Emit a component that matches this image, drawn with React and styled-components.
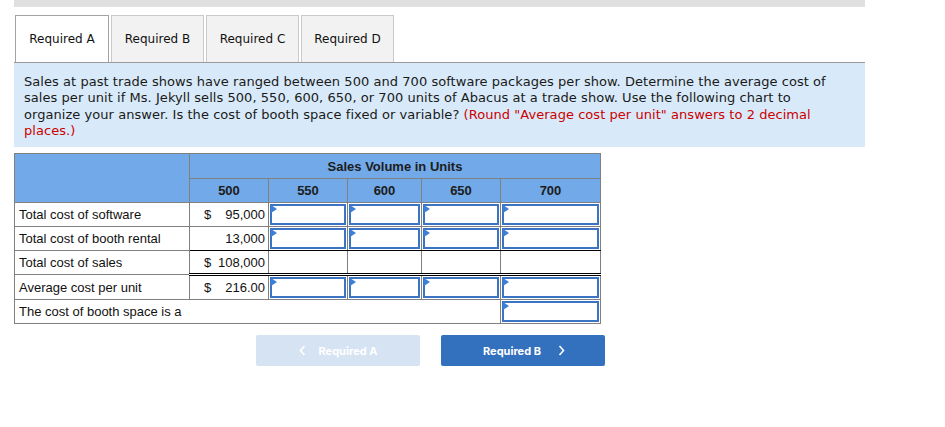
import React from 'react';
import styled, { createGlobalStyle } from 'styled-components';

const GlobalStyle = createGlobalStyle`
  body {
    margin: 0;
    background: #fff;
    color: #1a1a1a;
    font-family: "DejaVu Sans", Verdana, sans-serif;
  }
`;

const Page = styled.div`
  width: 851px;
  padding-left: 14px;
`;

const TopBar = styled.div`
  height: 7px;
  background: #e0e0e0;
`;

const TabBar = styled.div`
  display: flex;
  gap: 2px;
  margin-top: 8px;
  padding-left: 1px;
  border-bottom: 1px solid #9a9a9a;
`;

const Tab = styled.div`
  width: ${p => p.$w}px;
  box-sizing: border-box;
  display: flex;
  align-items: center;
  justify-content: center;
  font-size: 12px;
  color: #111;
  background: ${p => (p.$active ? '#fff' : '#f2f2f2')};
  border: 1px solid ${p => (p.$active ? '#a3a3a3' : '#cacaca')};
  border-bottom: none;
  height: 47px;
`;

const Prompt = styled.div`
  background: #d8eaf9;
  padding: 11px 10px 8px 10px;
  font-size: 13px;
  letter-spacing: 0.05px;
  line-height: 16.3px;
  color: #1a1a1a;
  white-space: nowrap;
`;

const Red = styled.span`
  color: #cc0000;
`;

const Table = styled.table`
  margin-top: 6px;
  border-collapse: collapse;
  table-layout: fixed;
  width: 586px;
  font-family: "Liberation Sans", Arial, sans-serif;
  font-size: 13px;
  color: #111;
  border: 1px solid #808080;
`;

const HeadCell = styled.th`
  background: #72a9e8;
  border: 1px solid #808080;
  height: ${p => p.$h || 23}px;
  padding: 0;
  font-weight: bold;
  text-align: center;
  color: #1c1c1c;
`;

const Label = styled.td`
  border: 1px solid #808080;
  height: 23px;
  padding: 0 0 0 4px;
  white-space: nowrap;
`;

const Cell = styled.td`
  border-left: 1px solid #808080;
  border-right: 1px solid #808080;
  border-top: 1px solid #808080;
  border-bottom: ${p =>
    p.$bottom === 'double' ? '3px double #000' : p.$bottom === 'black' ? '1px solid #000' : '1px solid #808080'};
  height: ${p => (p.$bottom === 'double' ? 21 : 23)}px;
  padding: 0;
`;

const Amount = styled.div`
  display: flex;
  justify-content: space-between;
  padding: 0 3px 0 14px;
`;

const InputBox = styled.div`
  position: relative;
  margin: 1px;
  height: 17px;
  border: 2px solid #3b74c2;
  background: #fff;

  &::before {
    content: '';
    position: absolute;
    left: -1px;
    top: -1px;
    border-left: 6px solid #3b80d6;
    border-top: 4px solid transparent;
    border-bottom: 4px solid transparent;
  }
`;

const Buttons = styled.div`
  display: flex;
  gap: 21px;
  margin-top: 11px;
  padding-left: 242px;
`;

const NavButton = styled.div`
  width: 164px;
  height: 31px;
  border-radius: 2px;
  display: flex;
  align-items: center;
  justify-content: center;
  gap: ${p => (p.$disabled ? '13px' : '17px')};
  font-family: Inter, "Liberation Sans", sans-serif;
  font-weight: 700;
  font-size: 11px;
  color: #fff;
  background: ${p => (p.$disabled ? '#d6e3f3' : '#3371be')};
  padding-left: ${p => (p.$disabled ? '0' : '2px')};
  box-sizing: border-box;
`;

const Chevron = ({ dir }) => (
  <svg width="7" height="11" viewBox="0 0 7 11">
    <path
      d={dir === 'left' ? 'M5.5 1 L1.5 5.5 L5.5 10' : 'M1.5 1 L5.5 5.5 L1.5 10'}
      fill="none"
      stroke="#fff"
      strokeWidth="1.6"
    />
  </svg>
);

const Input = () => <InputBox />;

const rows = [
  { label: 'Total cost of software', sign: '$', value: '95,000', input: true, bottom: 'grey' },
  { label: 'Total cost of booth rental', sign: '', value: '13,000', input: true, bottom: 'black' },
  { label: 'Total cost of sales', sign: '$', value: '108,000', input: false, bottom: 'double' },
  { label: 'Average cost per unit', sign: '$', value: '216.00', input: true, bottom: 'grey' },
];

export default function App() {
  return (
    <Page>
      <GlobalStyle />
      <TopBar />
      <TabBar>
        <Tab $active $w={94}>Required A</Tab>
        <Tab $w={93}>Required B</Tab>
        <Tab $w={93}>Required C</Tab>
        <Tab $w={93}>Required D</Tab>
      </TabBar>
      <Prompt>
        Sales at past trade shows have ranged between 500 and 700 software packages per show. Determine the average cost of
        <br />
        sales per unit if Ms. Jekyll sells 500, 550, 600, 650, or 700 units of Abacus at a trade show. Use the following chart to
        <br />
        organize your answer. Is the cost of booth space fixed or variable? <Red>(Round "Average cost per unit" answers to 2 decimal
        <br />
        places.)</Red>
      </Prompt>
      <Table>
        <colgroup>
          <col style={{ width: 175 }} />
          <col style={{ width: 79 }} />
          <col style={{ width: 79 }} />
          <col style={{ width: 74 }} />
          <col style={{ width: 79 }} />
          <col style={{ width: 100 }} />
        </colgroup>
        <thead>
          <tr>
            <HeadCell rowSpan={2} />
            <HeadCell colSpan={5} $h={24}>Sales Volume in Units</HeadCell>
          </tr>
          <tr>
            <HeadCell>500</HeadCell>
            <HeadCell>550</HeadCell>
            <HeadCell>600</HeadCell>
            <HeadCell>650</HeadCell>
            <HeadCell>700</HeadCell>
          </tr>
        </thead>
        <tbody>
          {rows.map(r => (
            <tr key={r.label}>
              <Label>{r.label}</Label>
              <Cell $bottom={r.bottom}>
                <Amount>
                  <span>{r.sign}</span>
                  <span>{r.value}</span>
                </Amount>
              </Cell>
              {[0, 1, 2, 3].map(i => (
                <Cell key={i} $bottom={r.bottom}>
                  {r.input && <Input />}
                </Cell>
              ))}
            </tr>
          ))}
          <tr>
            <Label colSpan={5}>The cost of booth space is a</Label>
            <Cell>
              <Input />
            </Cell>
          </tr>
        </tbody>
      </Table>
      <Buttons>
        <NavButton $disabled>
          <Chevron dir="left" />
          Required A
        </NavButton>
        <NavButton>
          Required B
          <Chevron dir="right" />
        </NavButton>
      </Buttons>
    </Page>
  );
}
